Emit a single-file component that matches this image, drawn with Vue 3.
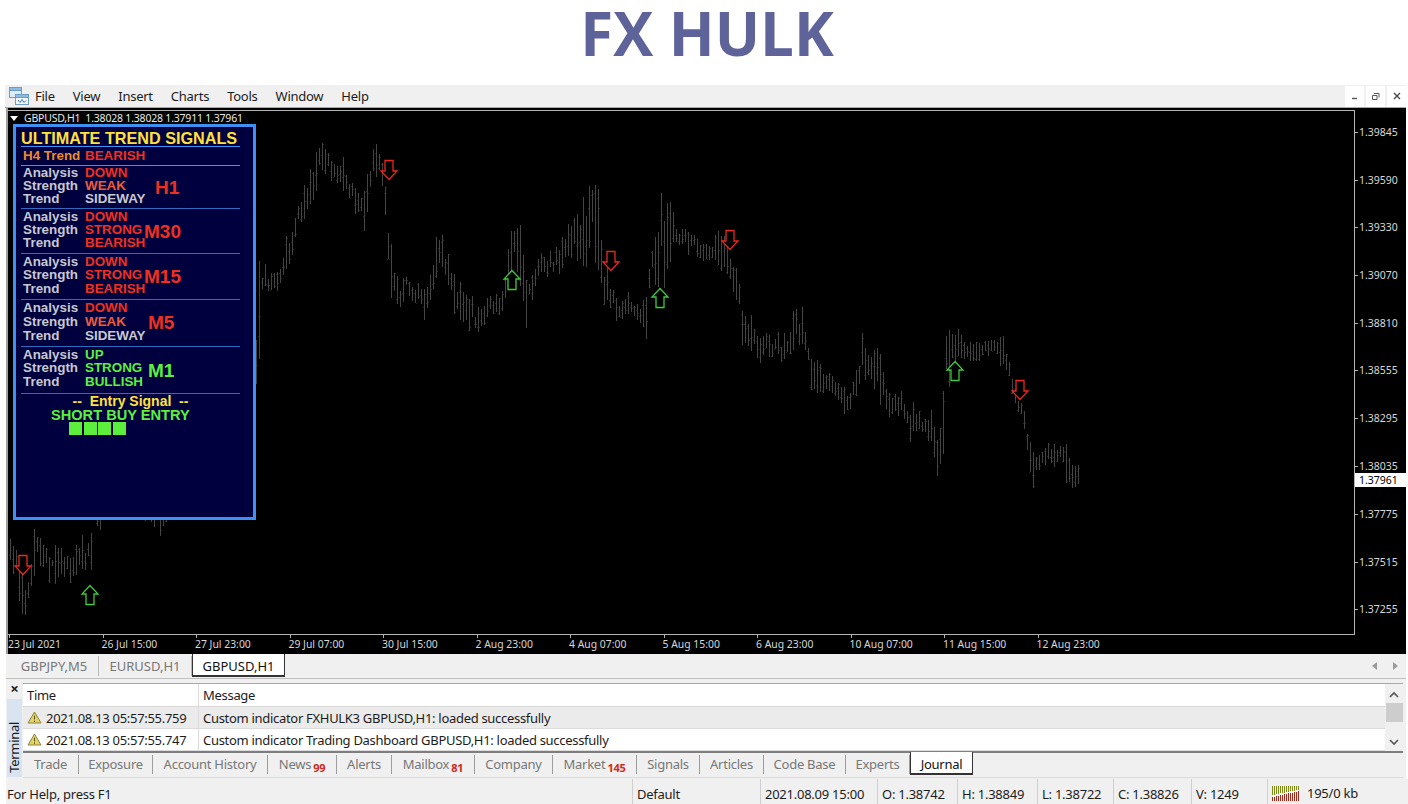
<template>
  <div class="page">
    <h1 class="brand">FX HULK</h1>

    <div class="menubar">
      <svg class="app-icon" width="22" height="20" viewBox="0 0 22 20">
        <rect x="1.5" y="1.5" width="12" height="10" fill="#dcecf8" stroke="#6d9cc8" />
        <rect x="1.5" y="1.5" width="12" height="3" fill="#8fbbe2" stroke="#6d9cc8" />
        <rect x="7.5" y="8.5" width="13" height="10" fill="#f4f9fd" stroke="#6d9cc8" />
        <rect x="7.5" y="8.5" width="13" height="3" fill="#8fbbe2" stroke="#6d9cc8" />
        <path d="M10 14l2 2.5 2-3 2 3 2-2" fill="none" stroke="#3f78ad" />
      </svg>
      <span v-for="item in menu" :key="item" class="menu-item">{{ item }}</span>
      <div class="win-buttons">
        <button class="win-btn" type="button">
          <svg width="8" height="8" viewBox="0 0 8 8"><path d="M1 6.5h5" stroke="#555" stroke-width="1.4" /></svg>
        </button>
        <button class="win-btn" type="button">
          <svg width="9" height="9" viewBox="0 0 9 9">
            <path d="M3 1.5h5v4M1.5 3.5h4.500v4h-4.500z" fill="none" stroke="#555" />
          </svg>
        </button>
        <button class="win-btn" type="button">
          <svg width="8" height="8" viewBox="0 0 8 8"><path d="M1 1l6 6M7 1l-6 6" stroke="#444" stroke-width="1.3" /></svg>
        </button>
      </div>
    </div>

    <div class="chart">
      <div class="chart-top">
        <div class="plot">
          <svg class="bars" width="1346" height="523" viewBox="8 111 1346 523">
            <path :d="bars.ticks" stroke="#262626" stroke-width="1" fill="none" shape-rendering="crispEdges" />
            <path :d="bars.stems" stroke="#444" stroke-width="1" fill="none" shape-rendering="crispEdges" />
            <path
              v-for="a in arrows"
              :key="a.x + '-' + a.y"
              :d="arrowPath(a)"
              :stroke="a.up ? '#41c83c' : '#e8281e'"
              stroke-width="1.3"
              fill="#000"
            />
          </svg>

          <div class="chart-caption">
            <span class="caption-arrow"></span>
            <span>GBPUSD,H1&nbsp; 1.38028 1.38028 1.37911 1.37961</span>
          </div>

          <div class="signals">
            <div class="signals-title">ULTIMATE TREND SIGNALS</div>
            <div class="signals-h4">
              <span class="lbl orange">H4 Trend</span>
              <span class="red">BEARISH</span>
            </div>
            <div
              v-for="tf in frames"
              :key="tf.name"
              class="tf-block"
              :style="{ height: tf.height + 'px', paddingTop: tf.pad + 'px', lineHeight: tf.rowH + 'px' }"
            >
              <div class="tf-rows">
                <template v-for="row in tf.rows" :key="row[0]">
                  <span class="lbl">{{ row[0] }}</span>
                  <span :class="row[2]">{{ row[1] }}</span>
                </template>
              </div>
              <span class="tf-name" :class="tf.color" :style="{ left: tf.left + 'px', top: tf.top + 'px' }">{{ tf.name }}</span>
            </div>
            <div class="entry-head">--&nbsp; Entry Signal&nbsp; --</div>
            <div class="entry-text">SHORT BUY ENTRY</div>
            <div class="entry-boxes">
              <i v-for="n in 4" :key="n"></i>
            </div>
          </div>
        </div>

        <div class="price-axis">
          <span
            v-for="p in prices"
            :key="p.label"
            class="price"
            :style="{ top: (p.y - 117) + 'px' }"
          >{{ p.label }}</span>
          <span class="price current" :style="{ top: (480 - 117) + 'px' }">1.37961</span>
        </div>
      </div>

      <div class="time-axis">
        <span v-for="t in times" :key="t" class="time">{{ t }}</span>
      </div>
    </div>

    <div class="chart-tabs">
      <span v-for="t in chartTabs" :key="t" class="chart-tab" :class="{ active: t === 'GBPUSD,H1' }">{{ t }}</span>
      <div class="tab-nav">
        <svg width="6" height="8" viewBox="0 0 6 8"><path d="M5 0v8L0 4z" fill="#9a9a9a" /></svg>
        <svg width="6" height="8" viewBox="0 0 6 8"><path d="M1 0v8l5-4z" fill="#9a9a9a" /></svg>
      </div>
    </div>

    <div class="terminal">
      <div class="gutter">
        <span class="gutter-x">×</span>
        <div class="gutter-label"><span>Terminal</span></div>
      </div>
      <div class="term-main">
        <div class="term-table">
          <div class="log">
            <div class="log-row head">
              <span class="col-time">Time</span>
              <span class="col-msg">Message</span>
            </div>
            <div v-for="(l, i) in logs" :key="l.time" class="log-row" :class="{ shade: i === 0 }">
              <span class="col-time">
                <svg width="15" height="13" viewBox="0 0 15 13">
                  <path d="M7.500 1L14 12H1z" fill="#e6d45a" stroke="#8b8450" />
                  <path d="M7.500 4.500v4M7.500 9.500v1.500" stroke="#5a5530" />
                </svg>
                {{ l.time }}
              </span>
              <span class="col-msg">{{ l.msg }}</span>
            </div>
          </div>
          <div class="scroll">
            <svg width="12" height="8" viewBox="0 0 12 8"><path d="M2 6l4-4 4 4" fill="none" stroke="#555" stroke-width="1.600" /></svg>
            <div class="thumb"></div>
            <svg class="scroll-down" width="12" height="8" viewBox="0 0 12 8"><path d="M2 2l4 4 4-4" fill="none" stroke="#555" stroke-width="1.600" /></svg>
          </div>
        </div>
        <div class="term-tabs">
          <span
            v-for="t in termTabs"
            :key="t.name"
            class="term-tab"
            :class="{ active: t.name === 'Journal' }"
            :style="{ width: t.width + 'px' }"
          >{{ t.name }}<b v-if="t.badge" class="badge">{{ t.badge }}</b></span>
        </div>
      </div>
    </div>

    <div class="status">
      <span class="st-cell st-help">For Help, press F1</span>
      <span class="st-cell st-profile">Default</span>
      <span class="st-cell st-date">2021.08.09 15:00</span>
      <span class="st-cell st-o">O: 1.38742</span>
      <span class="st-cell st-o">H: 1.38849</span>
      <span class="st-cell st-l">L: 1.38722</span>
      <span class="st-cell st-c">C: 1.38826</span>
      <span class="st-cell st-v">V: 1249</span>
      <span class="st-cell st-conn">
        <svg width="29" height="15" viewBox="0 0 29 15" shape-rendering="crispEdges">
          <path v-for="b in connBars" :key="b.x" :d="`M${b.x + 0.5} ${b.red}V15`" stroke="#9c2b1e" fill="none" />
          <path v-for="b in connBars" :key="'g' + b.x" :d="`M${b.x + 0.5} 0V${b.green}`" stroke="#7d8a1e" fill="none" />
        </svg>
        195/0 kb
      </span>
    </div>
  </div>
</template>

<script setup>
const menu = ['File', 'View', 'Insert', 'Charts', 'Tools', 'Window', 'Help']
const chartTabs = ['GBPJPY,M5', 'EURUSD,H1', 'GBPUSD,H1']

const prices = [
  ['1.39845', 132], ['1.39590', 180], ['1.39330', 227], ['1.39070', 275],
  ['1.38810', 323], ['1.38555', 370], ['1.38295', 418], ['1.38035', 466],
  ['1.37775', 514], ['1.37515', 562], ['1.37255', 609]
].map(([label, y]) => ({ label, y }))

const times = [
  '23 Jul 2021', '26 Jul 15:00', '27 Jul 23:00', '29 Jul 07:00', '30 Jul 15:00', '2 Aug 23:00',
  '4 Aug 07:00', '5 Aug 15:00', '6 Aug 23:00', '10 Aug 07:00', '11 Aug 15:00', '12 Aug 23:00'
]

const frames = [
  {
    name: 'H1', color: 'red', height: 43, left: 134, top: 11, pad: 0, rowH: 13,
    rows: [['Analysis', 'DOWN', 'red'], ['Strength', 'WEAK', 'salmon'], ['Trend', 'SIDEWAY', 'grey']]
  },
  {
    name: 'M30', color: 'red', height: 45, left: 123, top: 12, pad: 0.5, rowH: 13.2,
    rows: [['Analysis', 'DOWN', 'red'], ['Strength', 'STRONG', 'red'], ['Trend', 'BEARISH', 'red']]
  },
  {
    name: 'M15', color: 'red', height: 46, left: 123, top: 12, pad: 0.5, rowH: 13.5,
    rows: [['Analysis', 'DOWN', 'red'], ['Strength', 'STRONG', 'red'], ['Trend', 'BEARISH', 'red']]
  },
  {
    name: 'M5', color: 'red', height: 47, left: 127, top: 12, pad: 0.5, rowH: 14,
    rows: [['Analysis', 'DOWN', 'red'], ['Strength', 'WEAK', 'salmon'], ['Trend', 'SIDEWAY', 'grey']]
  },
  {
    name: 'M1', color: 'green', height: 47, left: 127, top: 13, pad: 0.5, rowH: 13.7,
    rows: [['Analysis', 'UP', 'green'], ['Strength', 'STRONG', 'green'], ['Trend', 'BULLISH', 'green']]
  }
]

const logs = [
  { time: '2021.08.13 05:57:55.759', msg: 'Custom indicator FXHULK3 GBPUSD,H1: loaded successfully' },
  { time: '2021.08.13 05:57:55.747', msg: 'Custom indicator Trading Dashboard GBPUSD,H1: loaded successfully' }
]

const termTabs = [
  { name: 'Trade', width: 56 }, { name: 'Exposure', width: 74 }, { name: 'Account History', width: 115 },
  { name: 'News', badge: '99', width: 69 }, { name: 'Alerts', width: 55 }, { name: 'Mailbox', badge: '81', width: 83 },
  { name: 'Company', width: 78 }, { name: 'Market', badge: '145', width: 84 }, { name: 'Signals', width: 63 },
  { name: 'Articles', width: 64 }, { name: 'Code Base', width: 82 }, { name: 'Experts', width: 64 },
  { name: 'Journal', width: 63 }
]

const connBars = Array.from({ length: 14 }, (_, i) => ({
  x: i * 2,
  red: Math.round(11 - i * 0.45),
  green: Math.round(9 - i * 0.4)
}))

// price envelope read off the chart: x, top of bars, bottom of bars
const envelope = [
  [10, 540, 562], [14, 535, 565], [18, 560, 598], [22, 570, 615], [26, 580, 620], [30, 575, 600], [33, 525, 575],
  [40, 540, 568], [50, 545, 575], [55, 540, 590], [60, 548, 575], [70, 555, 580], [75, 560, 578], [80, 545, 565],
  [85, 525, 580], [91, 520, 582], [94, 500, 540], [102, 490, 525], [130, 470, 510], [160, 500, 536], [165, 490, 525],
  [200, 400, 450], [240, 330, 380], [258, 270, 420],
  [260, 270, 295], [276, 275, 290], [282, 263, 285], [285, 238, 270], [295, 217, 236], [300, 190, 225],
  [308, 175, 200], [315, 145, 195], [320, 138, 170], [330, 158, 180], [340, 165, 185], [348, 175, 200],
  [358, 190, 210], [363, 195, 225], [368, 165, 200], [374, 135, 175], [380, 150, 200], [386, 188, 225],
  [389, 190, 292], [392, 265, 305], [400, 285, 308], [406, 265, 300], [415, 282, 300], [425, 290, 312],
  [432, 270, 295], [440, 230, 268], [447, 250, 280], [455, 265, 320], [462, 285, 320], [470, 295, 325],
  [478, 315, 332], [485, 300, 320], [495, 295, 308], [502, 295, 310], [508, 245, 290], [518, 222, 270],
  [525, 245, 320], [530, 280, 305], [540, 255, 270], [555, 257, 275], [562, 240, 280], [575, 205, 260],
  [597, 183, 270], [603, 262, 305], [610, 280, 310], [620, 308, 318], [630, 300, 318], [640, 305, 325],
  [646, 295, 340], [650, 245, 282], [660, 205, 290], [668, 200, 280], [675, 225, 245], [685, 232, 245],
  [695, 235, 245], [700, 245, 260], [710, 245, 255], [718, 230, 270], [727, 240, 275], [735, 260, 300],
  [738, 275, 320], [742, 310, 340], [750, 325, 350], [770, 335, 360], [785, 345, 362], [795, 300, 350],
  [803, 300, 345], [806, 340, 352], [812, 360, 390], [820, 372, 395], [830, 378, 392], [840, 380, 400],
  [845, 390, 405], [855, 375, 398], [862, 340, 375], [870, 355, 378], [880, 347, 410], [887, 395, 420],
  [900, 395, 410], [910, 410, 435], [917, 415, 425], [925, 420, 430], [932, 420, 460], [938, 440, 468],
  [942, 415, 450], [945, 333, 420], [950, 345, 385], [957, 330, 360], [959, 313, 350], [965, 343, 355],
  [975, 345, 357], [985, 338, 352], [995, 340, 352], [1000, 328, 370], [1005, 345, 370], [1012, 375, 390],
  [1017, 390, 410], [1025, 410, 440], [1030, 440, 470], [1032, 450, 483], [1037, 460, 475], [1045, 450, 460],
  [1055, 445, 465], [1062, 445, 456], [1067, 455, 478], [1073, 460, 490], [1078, 470, 488]
]

function envelopeAt(x) {
  let i = 0
  while (i < envelope.length - 2 && envelope[i + 1][0] < x) i++
  const [x0, h0, l0] = envelope[i]
  const [x1, h1, l1] = envelope[i + 1]
  const t = Math.min(1, Math.max(0, (x - x0) / (x1 - x0)))
  return [h0 + (h1 - h0) * t, l0 + (l1 - l0) * t]
}

function buildBars() {
  let seed = 7
  const rnd = () => {
    seed = (seed * 16807) % 2147483647
    return seed / 2147483647
  }
  let stems = ''
  let ticks = ''
  for (let x = 10; x <= 1078; x += 3) {
    const [hi, lo] = envelopeAt(x)
    const span = lo - hi
    // uneven bar lengths, some reach past the envelope and some stop well inside it
    let top = hi + rnd() * rnd() * span * 0.7 - 2 + rnd() * 4
    let bottom = lo - rnd() * rnd() * span * 0.7 - 2 + rnd() * 4
    if (rnd() < 0.2) top -= 5 + rnd() * 8
    if (rnd() < 0.2) bottom += 5 + rnd() * 8
    if (bottom - top < 10) {
      top -= 5
      bottom += 5
    }
    top = Math.round(top)
    bottom = Math.round(bottom)
    const open = Math.round(top + rnd() * (bottom - top))
    const close = Math.round(top + rnd() * (bottom - top))
    stems += `M${x + 0.5} ${top}V${bottom}`
    ticks += `M${x - 1} ${open + 0.5}h1M${x + 1} ${close + 0.5}h1`
  }
  return { stems, ticks }
}

const bars = buildBars()

const arrows = [
  { x: 389, y: 170 }, { x: 611, y: 261 }, { x: 730, y: 240 }, { x: 1020, y: 390 }, { x: 23, y: 565 },
  { x: 512, y: 280, up: true }, { x: 660, y: 298, up: true }, { x: 955, y: 371, up: true }, { x: 90, y: 595, up: true }
]

function arrowPath({ x, y, up }) {
  const s = up ? 1 : -1
  return `M${x} ${y - 9.5 * s}L${x + 8} ${y - 1 * s}H${x + 4}V${y + 9.5 * s}H${x - 4}V${y - 1 * s}H${x - 8}Z`
}
</script>

<style>
html,
body {
  margin: 0;
  background: #fff;
  overflow: hidden;
}
</style>

<style scoped>
.page {
  width: 1408px;
  height: 804px;
  display: flex;
  flex-direction: column;
  font-family: "Noto Sans", "Open Sans", sans-serif;
  font-size: 13px;
  color: #1c1c1c;
  background: #fff;
}

.brand {
  margin: 0;
  height: 85px;
  padding-left: 6px;
  box-sizing: border-box;
  line-height: 67px;
  text-align: center;
  font-family: "Open Sans", sans-serif;
  font-size: 60px;
  font-weight: 700;
  color: #5e6399;
}

.menubar {
  height: 23px;
  margin-left: 5px;
  margin-right: 2px;
  display: flex;
  align-items: center;
  gap: 18px;
  background: #f0f0f0;
  box-sizing: border-box;
  border-bottom: 1px solid #a8a8a8;
  font-size: 13px;
  letter-spacing: -0.25px;
}

.app-icon {
  margin: 0 -13px 0 3px;
}

.win-buttons {
  margin-left: auto;
  display: flex;
  gap: 2px;
}

.win-btn {
  width: 19px;
  height: 21px;
  padding: 0;
  border: 0;
  background: #fff;
  display: flex;
  align-items: center;
  justify-content: center;
}

.chart {
  height: 546px;
  margin-left: 6px;
  margin-right: 2px;
  display: flex;
  flex-direction: column;
  background: #000;
  border-left: 2px solid #a0a0a0;
  box-sizing: border-box;
}

.chart-top {
  height: 527px;
  padding-top: 2px;
  box-sizing: border-box;
  display: flex;
  position: relative;
}

.plot {
  width: 1347px;
  height: 525px;
  flex: none;
  box-sizing: border-box;
  border: 1px solid #b4b4b4;
  border-left: 0;
  position: relative;
}

.bars {
  display: block;
}

.chart-caption {
  position: absolute;
  left: 2px;
  top: 1px;
  display: flex;
  align-items: center;
  gap: 6px;
  font-size: 10.500px;
  line-height: 13px;
  letter-spacing: -0.2px;
  color: #e8e8e8;
}

.caption-arrow {
  width: 0;
  height: 0;
  border-left: 4px solid transparent;
  border-right: 4px solid transparent;
  border-top: 5px solid #fff;
}

.signals {
  position: absolute;
  left: 5px;
  top: 13px;
  width: 243px;
  height: 396px;
  box-sizing: border-box;
  border: 3px solid #3f90f4;
  background: #00003e;
  padding: 1px 13px 0 5px;
  font-family: "Liberation Sans", Arial, sans-serif;
  font-weight: 700;
  font-size: 13.400px;
  line-height: 13.500px;
  color: #c8c8d0;
}

.signals-title {
  height: 18px;
  line-height: 20px;
  font-size: 16.200px;
  color: #ffe03c;
  border-bottom: 1px solid #3f90f4;
  white-space: nowrap;
}

.signals-h4 {
  height: 18px;
  line-height: 17px;
  display: grid;
  grid-template-columns: 62px auto;
  padding-left: 2px;
  border-bottom: 1px solid #3f90f4;
}

.tf-block {
  position: relative;
  box-sizing: border-box;
  border-bottom: 1px solid #2f6cc0;
}

.tf-rows {
  display: grid;
  grid-template-columns: 62px auto;
  padding-left: 2px;
}

.tf-name {
  position: absolute;
  font-size: 19px;
  line-height: 22px;
}

.red {
  color: #f0301e;
}

.salmon {
  color: #ee5c3c;
}

.orange {
  color: #ee8a2d;
}

.grey {
  color: #c8c8d0;
}

.green {
  color: #5cf03c;
}

.entry-head {
  height: 14px;
  line-height: 15px;
  text-align: center;
  color: #ffe03c;
  font-size: 14px;
}

.entry-text {
  height: 14px;
  line-height: 14px;
  padding-left: 30px;
  color: #5cf03c;
  font-size: 14.600px;
  white-space: nowrap;
}

.entry-boxes {
  display: flex;
  gap: 1.500px;
  margin-left: 48px;
}

.entry-boxes i {
  display: block;
  width: 13px;
  height: 13px;
  background: #5cf03c;
}

.price-axis {
  flex: 1;
  position: relative;
  color: #d8d8d8;
  font-size: 10.500px;
}

.price {
  position: absolute;
  left: 0;
  right: 0;
  padding-left: 4px;
  height: 14px;
  line-height: 14px;
  white-space: nowrap;
}

.price::before {
  content: "";
  position: absolute;
  left: 0;
  top: 7px;
  width: 3px;
  height: 1px;
  background: #b4b4b4;
}

.price.current {
  background: #fff;
  color: #000;
}

.price.current::before {
  display: none;
}

.time-axis {
  height: 19px;
  display: flex;
  color: #d8d8d8;
  font-size: 10.400px;
  line-height: 19px;
}

.time {
  width: 93.500px;
  flex: none;
  white-space: nowrap;
  position: relative;
}

.time::before {
  content: "";
  position: absolute;
  left: 1px;
  top: 0;
  width: 1px;
  height: 3px;
  background: #b4b4b4;
}

.chart-tabs {
  height: 25px;
  margin-left: 6px;
  margin-right: 2px;
  background: #f0f0f0;
  border-bottom: 1px solid #c0c0c0;
  box-sizing: border-box;
  display: flex;
  color: #777;
  position: relative;
}

.chart-tab {
  width: 93px;
  box-sizing: border-box;
  text-align: center;
  border-right: 1px solid #b8b8b8;
  height: 20px;
  margin-top: 2px;
  line-height: 20px;
}

.chart-tab:first-child {
  padding-left: 4px;
}

.chart-tab.active {
  height: 23px;
  margin-top: 0;
  line-height: 25px;
  background: #fff;
  color: #111;
  border: 1px solid #333;
  border-top: 0;
  border-bottom-width: 2px;
}

.tab-nav {
  margin-left: auto;
  display: flex;
  gap: 14px;
  padding: 8px 8px 0 0;
}

.terminal {
  height: 100px;
  margin-left: 6px;
  margin-right: 2px;
  display: flex;
  background: #f0f0f0;
  box-sizing: border-box;
  padding-top: 4px;
}

.gutter {
  width: 17px;
  flex: none;
  display: flex;
  flex-direction: column;
}

.gutter-x {
  height: 16px;
  line-height: 11px;
  text-align: center;
  font-weight: 700;
  font-size: 15px;
  color: #222;
}

.gutter-label {
  flex: 1;
  margin: 0 1px 2px;
  background: #d8e4f0;
  display: flex;
  align-items: center;
  justify-content: flex-start;
  writing-mode: vertical-rl;
  font-size: 13px;
  letter-spacing: -0.3px;
  color: #1a1a1a;
}

.gutter-label span {
  transform: rotate(180deg);
  line-height: 15px;
  margin-top: auto;
  margin-bottom: 4px;
}

.term-main {
  flex: 1;
  display: flex;
  flex-direction: column;
  min-width: 0;
  padding-right: 3px;
}

.term-table {
  height: 70px;
  display: flex;
  border-top: 1px solid #a8a8a8;
  border-bottom: 2px solid #7e7e7e;
  box-sizing: border-box;
  letter-spacing: -0.3px;
}

.log {
  flex: 1;
  background: #fff;
}

.log-row {
  display: flex;
  height: 22px;
  line-height: 22px;
  border-bottom: 1px solid #dcdcdc;
  box-sizing: border-box;
  white-space: nowrap;
}

.log-row.head {
  height: 23px;
  border-bottom: 1px solid #d8d8d8;
}

.log-row.shade {
  background: #ebebeb;
}

.col-time {
  width: 176px;
  box-sizing: border-box;
  padding-left: 4px;
  border-right: 1px solid #dcdcdc;
  display: flex;
  align-items: center;
  gap: 4px;
  flex: none;
}

.col-msg {
  padding-left: 4px;
}

.scroll {
  width: 18px;
  flex: none;
  display: flex;
  flex-direction: column;
  align-items: center;
  background: #f0f0f0;
  padding-top: 7px;
  box-sizing: border-box;
}

.thumb {
  width: 17px;
  height: 19px;
  margin-top: 4px;
  background: #cdcdcd;
}

.scroll-down {
  margin-top: auto;
  margin-bottom: 5px;
}

.term-tabs {
  height: 25px;
  display: flex;
  color: #777;
  border-bottom: 1px solid #dcdcdc;
  box-sizing: border-box;
  letter-spacing: -0.25px;
}

.term-tab {
  box-sizing: border-box;
  height: 19px;
  margin-top: 2px;
  line-height: 19px;
  text-align: center;
  border-right: 1px solid #9c9c9c;
  white-space: nowrap;
}

.term-tab.active {
  height: 23px;
  margin-top: -1px;
  line-height: 24px;
  background: #fff;
  color: #111;
  border: 1px solid #333;
  border-top: 0;
  border-bottom-width: 2px;
}

.badge {
  margin-left: 2px;
  font-size: 11px;
  color: #d02a1c;
  position: relative;
  top: 3px;
}

.status {
  height: 25px;
  margin-left: 6px;
  display: flex;
  align-items: center;
  background: #f0f0f0;
  font-size: 13px;
  letter-spacing: -0.25px;
  white-space: nowrap;
}

.st-cell {
  box-sizing: border-box;
  height: 100%;
  line-height: 30px;
  padding-left: 4px;
  border-right: 1px solid #cfcfcf;
  flex: none;
}

.st-help {
  width: 627px;
  padding-left: 1px;
}

.st-profile {
  width: 128px;
}

.st-date {
  width: 117px;
}

.st-o {
  width: 80px;
}

.st-l {
  width: 76px;
}

.st-c {
  width: 78px;
}

.st-v {
  width: 76px;
}

.st-conn {
  border-right: 0;
  display: flex;
  align-items: center;
  gap: 6px;
  padding-top: 3px;
  line-height: 1;
}
</style>
